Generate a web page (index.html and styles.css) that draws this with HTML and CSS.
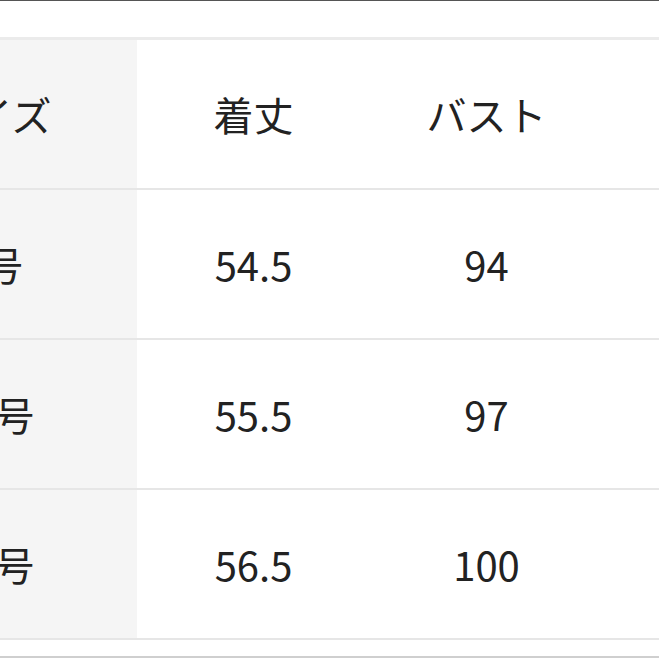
FILE: index.html
```html
<!DOCTYPE html>
<html lang="ja">
<head>
<meta charset="utf-8">
<link rel="stylesheet" href="styles.css">
</head>
<body>
<div class="topline"></div>
<div class="frame">
  <table class="size-table">
    <thead>
      <tr>
        <th class="col-size">サイズ</th>
        <th class="col-val">着丈</th>
        <th class="col-val">バスト</th>
        <th class="col-val">肩幅</th>
      </tr>
    </thead>
    <tbody>
      <tr>
        <th class="col-size">9号</th>
        <td>54.5</td>
        <td>94</td>
        <td>37</td>
      </tr>
      <tr>
        <th class="col-size">11号</th>
        <td>55.5</td>
        <td>97</td>
        <td>38</td>
      </tr>
      <tr>
        <th class="col-size">13号</th>
        <td>56.5</td>
        <td>100</td>
        <td>39</td>
      </tr>
      <tr class="tail">
        <th class="col-size"></th>
        <td></td>
        <td></td>
        <td></td>
      </tr>
    </tbody>
  </table>
</div>
</body>
</html>
```
FILE: styles.css
```css
html, body {
  margin: 0;
  padding: 0;
  background: #ffffff;
}
body {
  width: 659px;
  height: 659px;
  overflow: hidden;
  font-family: "Noto Sans CJK JP", "Noto Sans", sans-serif;
  color: #222222;
}
.topline {
  height: 1px;
  background: #555555;
}
.frame {
  margin-top: 36px;
  overflow: hidden;
  width: 659px;
}
.size-table {
  margin-left: -153px;
  border-collapse: collapse;
  border-top: 3px solid #ebebeb;
  table-layout: fixed;
  width: 989px;
}
.size-table th,
.size-table td {
  height: 148px;
  padding: 0;
  border-bottom: 2px solid #e6e6e6;
  text-align: center;
  vertical-align: middle;
  font-size: 40px;
  font-weight: 400;
  line-height: 1;
}
.size-table .col-size {
  width: 290px;
  background: #f5f5f5;
}
.size-table .col-val {
  width: 233px;
}
.size-table tr.tail th,
.size-table tr.tail td {
  height: 16px;
  background: #ffffff;
  border-bottom: 2px solid #cfcfcf;
}
```
